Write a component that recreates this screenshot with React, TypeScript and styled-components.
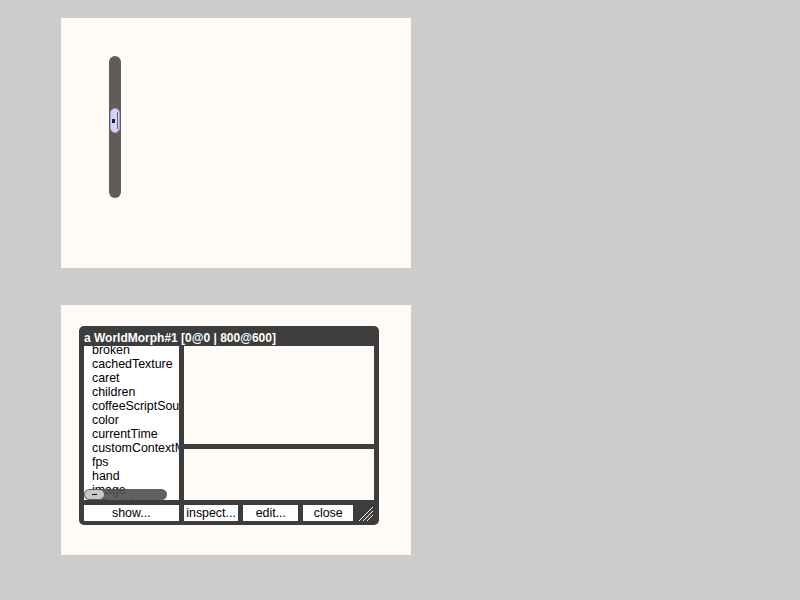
import React from "react";
import styled, { createGlobalStyle } from "styled-components";

const Global = createGlobalStyle`
  html, body { margin: 0; padding: 0; background: #cccccc; }
  body { font-family: "Liberation Sans", Arial, sans-serif; }
`;

const Page = styled.div`
  display: flex;
  flex-direction: column;
  gap: 37px;
  padding: 18px 0 0 61px;
  width: 800px;
  height: 600px;
  box-sizing: border-box;
`;

const Stage = styled.div<{ $pad: string }>`
  width: 350px;
  height: 250px;
  background: #fffaf5;
  padding: ${(p) => p.$pad};
  box-sizing: border-box;
`;

const Track = styled.div`
  position: relative;
  width: 12px;
  height: 142px;
  border-radius: 6px;
  background: #5f5c5a;
`;

const Knob = styled.div`
  position: absolute;
  left: 1px;
  top: 52px;
  width: 10px;
  height: 25px;
  box-sizing: border-box;
  border-radius: 5px;
  border: 1px solid #a0a0dc;
  background: #d4d4fa;
  &::before {
    content: "";
    position: absolute;
    left: 1px;
    top: 10px;
    width: 3px;
    height: 4px;
    background: #222;
  }
  &::after {
    content: "";
    position: absolute;
    right: 1px;
    top: 3px;
    width: 1px;
    height: 17px;
    background: #666;
  }
`;

const Window = styled.div`
  width: 300px;
  height: 199px;
  background: #3d3d3d;
  border-radius: 5px;
  display: flex;
  flex-direction: column;
  padding: 0 5px 4px 5px;
  box-sizing: border-box;
`;

const Title = styled.div`
  height: 20px;
  line-height: 24px;
  color: #ffffff;
  font-weight: bold;
  font-size: 12px;
  white-space: nowrap;
`;

const Body = styled.div`
  display: flex;
  gap: 5px;
  height: 154px;
`;

const List = styled.div`
  position: relative;
  width: 95px;
  background: #ffffff;
  overflow: hidden;
`;

const Items = styled.div`
  margin-top: -3px;
  padding-left: 8px;
  font-size: 12.4px;
  line-height: 14px;
  color: #000;
  white-space: nowrap;
`;

const HScroll = styled.div`
  position: absolute;
  left: 0;
  top: 143px;
  width: 83px;
  height: 11px;
  border-radius: 6px;
  background: rgba(80, 80, 80, 0.9);
`;

const HKnob = styled.div`
  position: absolute;
  left: 1px;
  top: 1px;
  width: 19px;
  height: 9px;
  border-radius: 5px;
  background: #c8c8c8;
  &::after {
    content: "";
    position: absolute;
    left: 7px;
    top: 4px;
    width: 5px;
    height: 1px;
    background: #111;
  }
`;

const Right = styled.div`
  width: 190px;
  display: flex;
  flex-direction: column;
  gap: 5px;
`;

const Pane = styled.div<{ $h: number }>`
  height: ${(p) => p.$h}px;
  background: #fffaf5;
`;

const Buttons = styled.div`
  display: flex;
  gap: 5px;
  margin-top: 5px;
  height: 16px;
  align-items: stretch;
`;

const Btn = styled.div<{ $w: number }>`
  width: ${(p) => p.$w}px;
  background: #ffffff;
  font-size: 12.4px;
  line-height: 17px;
  text-align: center;
  color: #000;
  white-space: nowrap;
  overflow: hidden;
`;

const Resize = styled.svg`
  margin-left: -1px;
`;

const items = [
  "broken",
  "cachedTexture",
  "caret",
  "children",
  "coffeeScriptSource",
  "color",
  "currentTime",
  "customContextMenu",
  "fps",
  "hand",
  "image",
  "isDevMode",
];

export default function App() {
  return (
    <>
      <Global />
      <Page>
        <Stage $pad="38px 0 0 48px">
          <Track>
            <Knob />
          </Track>
        </Stage>
        <Stage $pad="21px 0 0 18px">
          <Window>
            <Title>a WorldMorph#1 [0@0 | 800@600]</Title>
            <Body>
              <List>
                <Items>
                  {items.map((t) => (
                    <div key={t}>{t}</div>
                  ))}
                </Items>
                <HScroll>
                  <HKnob />
                </HScroll>
              </List>
              <Right>
                <Pane $h={98} />
                <Pane $h={51} />
              </Right>
            </Body>
            <Buttons>
              <Btn $w={95}>show...</Btn>
              <Btn $w={55}>inspect...</Btn>
              <Btn $w={55}>edit...</Btn>
              <Btn $w={50}>close</Btn>
              <Resize width="17" height="16" viewBox="0 0 17 16">
                <g stroke="#ffffff" strokeWidth="1">
                  <line x1="2" y1="16" x2="16" y2="2" />
                  <line x1="6" y1="16" x2="16" y2="6" />
                  <line x1="10" y1="16" x2="16" y2="10" />
                </g>
              </Resize>
            </Buttons>
          </Window>
        </Stage>
      </Page>
    </>
  );
}
